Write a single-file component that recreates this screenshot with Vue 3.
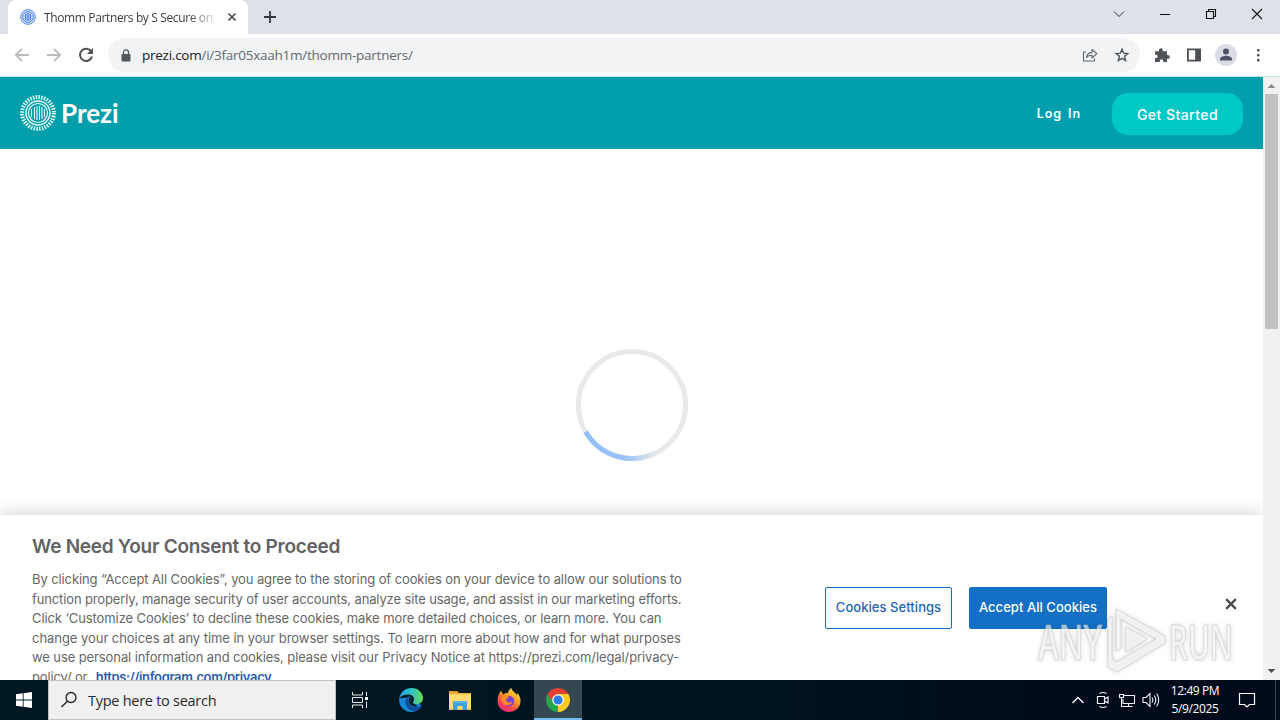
<template>
  <div class="desktop">
    <div class="tabstrip">
      <div class="tab">
        <svg class="favicon" viewBox="0 0 16 16">
          <circle cx="8" cy="8" r="7.3" fill="#d5e5ff" stroke="#4b82ee" stroke-width="1" />
          <circle cx="8" cy="8" r="5.3" fill="none" stroke="#4b82ee" stroke-width="1" />
          <path d="M5.5 5v6M7.2 4v8M8.9 4v8M10.6 5v6" stroke="#3b76ea" stroke-width="1" />
        </svg>
        <span class="tab-title">Thomm Partners by S Secure on</span>
        <svg class="tab-close" viewBox="0 0 10 10"><path d="M1.5 1.5l7 7M8.5 1.5l-7 7" stroke="#45494d" stroke-width="1.6" /></svg>
      </div>
      <svg class="new-tab" viewBox="0 0 12 12"><path d="M6 0v12M0 6h12" stroke="#34373b" stroke-width="1.8" /></svg>
      <div class="win-buttons">
        <svg viewBox="0 0 12 12"><path d="M1 3.5l5 5 5-5" fill="none" stroke="#333" /></svg>
        <svg viewBox="0 0 12 12"><path d="M1 6.5h10" stroke="#111" /></svg>
        <svg viewBox="0 0 12 12"><path d="M1.5 3.5h7v7h-7zM3.5 3.5v-2h7v7h-2" fill="none" stroke="#111" stroke-width="1.1" /></svg>
        <svg viewBox="0 0 12 12"><path d="M1 1l10 10M11 1L1 11" stroke="#111" stroke-width="1.1" /></svg>
      </div>
    </div>

    <div class="toolbar">
      <div class="nav">
        <svg viewBox="0 0 16 16"><path d="M15 8H2M8 1.8L1.8 8 8 14.2" fill="none" stroke="#b9bbbe" stroke-width="1.8" /></svg>
        <svg viewBox="0 0 16 16"><path d="M1 8h13M8 1.8L14.2 8 8 14.2" fill="none" stroke="#b9bbbe" stroke-width="1.8" /></svg>
        <svg viewBox="0 0 16 16">
          <path d="M13.2 4.4A6.1 6.1 0 1 0 14 9.5" fill="none" stroke="#505357" stroke-width="2" />
          <path d="M15 1v6H9z" fill="#505357" />
        </svg>
      </div>
      <div class="omnibox">
        <svg class="lock" viewBox="0 0 10 13">
          <rect x="0.5" y="5" width="9" height="7.5" rx="1" fill="#53575b" />
          <path d="M2.5 5.5V3.4a2.5 2.5 0 0 1 5 0v2.1" fill="none" stroke="#53575b" stroke-width="1.3" />
        </svg>
        <span class="url"><b>prezi.com</b>/i/3far05xaah1m/thomm-partners/</span>
        <svg class="share" viewBox="0 0 16 16">
          <path d="M4 5H1.5v9h11v-2.500M4.500 10.500C5 7.500 7 5.600 10 5.400V2.500l4.800 4.200L10 11V8.300C7.500 8.300 5.800 9 4.500 10.500z" fill="none" stroke="#5f6368" stroke-width="1.100" stroke-linejoin="round" />
        </svg>
        <svg class="star" viewBox="0 0 16 16">
          <path d="M8 2.200l1.600 4 4.200.4-3.200 2.700 1 4.200L8 11.300l-3.600 2.200 1-4.200-3.200-2.700 4.200-.4z" fill="none" stroke="#505357" stroke-width="1.400" />
        </svg>
      </div>
      <div class="tools">
        <svg viewBox="0 0 16 16"><path d="M1 4.200h4V3.100a1.900 1.900 0 0 1 3.800 0v1.100H13V8h.9a1.900 1.900 0 0 1 0 3.800H13V15H9.200v-1a1.700 1.700 0 0 0-3.400 0v1H1v-4h1a1.600 1.600 0 0 0 0-3.200H1z" fill="#505357" /></svg>
        <svg viewBox="0 0 16 16"><path d="M1 1.500h14v13H1zM2.800 3.300v9.400h6.400V3.300z" fill="#4b4e52" fill-rule="evenodd" /></svg>
        <svg class="avatar" viewBox="0 0 22 22">
          <circle cx="11" cy="11" r="11" fill="#dadce6" />
          <circle cx="11" cy="7.600" r="3" fill="#4e5264" />
          <path d="M5 16.500v-1.500c0-2.200 4-3.200 6-3.200s6 1 6 3.200v1.500z" fill="#4e5264" />
        </svg>
        <svg viewBox="0 0 16 16"><g fill="#4b4e52"><rect x="7" y="2" width="2.600" height="2.600" rx="1" /><rect x="7" y="6.900" width="2.600" height="2.600" rx="1" /><rect x="7" y="11.800" width="2.600" height="2.600" rx="1" /></g></svg>
      </div>
    </div>

    <div class="viewport">
      <div class="page">
        <header class="site-header">
          <svg class="logo" viewBox="0 0 36 36">
            <g fill="none" stroke="#e9fbfc">
              <circle cx="18" cy="18" r="15.900" stroke-width="4" stroke-dasharray="1.500 1.275" />
              <circle cx="18" cy="18" r="12" stroke-width="1.400" />
              <circle cx="18" cy="18" r="9.500" stroke-width="1.200" />
              <path d="M11.500 14v8M14.500 12v12M17 11v14M19.500 11v14M22 12v12M24.500 14v8" stroke-width="1.100" />
            </g>
          </svg>
          <span class="brand">Prezi</span>
          <a class="login">Log In</a>
          <a class="get-started">Get Started</a>
        </header>

        <main class="stage">
          <svg class="loader" viewBox="0 0 112 112">
            <defs>
              <linearGradient id="arc" x1="9" y1="0" x2="80" y2="0" gradientUnits="userSpaceOnUse">
                <stop offset="0" stop-color="#91bffa" />
                <stop offset="0.550" stop-color="#9ac3f8" />
                <stop offset="1" stop-color="#e9e9ea" />
              </linearGradient>
            </defs>
            <circle cx="56" cy="56" r="53.500" fill="none" stroke="#e9e9e9" stroke-width="5" />
            <path d="M9.700 82.800A53.500 53.500 0 0 0 80 103.800" fill="none" stroke="url(#arc)" stroke-width="5" />
          </svg>
        </main>

        <section class="consent">
          <div class="consent-text">
            <h2>We Need Your Consent to Proceed</h2>
            <p v-for="line in lines" :key="line.text" :style="{ letterSpacing: line.gap + 'px' }">{{ line.text }}</p>
            <p class="last">policy/ or <a>https://infogram.com/privacy</a></p>
          </div>
          <button class="btn settings">Cookies Settings</button>
          <button class="btn accept">Accept All Cookies</button>
          <svg class="consent-close" viewBox="0 0 12 12"><path d="M1.200 1.200l9.600 9.600M10.800 1.200l-9.600 9.600" stroke="#4c4c4c" stroke-width="2.400" /></svg>
        </section>
      </div>

      <div class="scrollbar">
        <svg viewBox="0 0 17 17"><path d="M4.500 11h8l-4-4z" fill="#8b8b8b" /></svg>
        <div class="thumb"></div>
        <svg class="down" viewBox="0 0 17 17"><path d="M4.500 6h8l-4 4z" fill="#505050" /></svg>
      </div>
    </div>

    <div class="taskbar">
      <div class="start">
        <svg viewBox="0 0 16 16"><path d="M0 2.300l6.800-1v6.200H0zM7.600 1.200L16 0v7.500H7.600zM0 8.400h6.800v6.300L0 13.700zM7.600 8.400H16V16l-8.400-1.200z" fill="#fff" /></svg>
      </div>
      <div class="search">
        <svg viewBox="0 0 18 18"><circle cx="11" cy="6.500" r="5" fill="none" stroke="#222" stroke-width="1.300" /><path d="M7.400 10.200L1.500 16" stroke="#222" stroke-width="1.400" /></svg>
        <span>Type here to search</span>
      </div>
      <div class="app views">
        <svg class="task-view" viewBox="0 0 18 18"><path d="M1.500 1v3h10V1M1.500 17v-3h10v3M1.500 6.500h10v5h-10zM15.500 1v4M15.500 10.500V17" fill="none" stroke="#e5eaec" /><rect x="14" y="6" width="3" height="3" fill="#fff" /></svg>
      </div>
      <div class="app">
        <svg viewBox="0 0 24 24">
          <defs>
            <linearGradient id="edge-top" x1="0" y1="0.500" x2="1" y2="0.500">
              <stop offset="0" stop-color="#21a5df" /><stop offset="0.500" stop-color="#2bc3c8" /><stop offset="1" stop-color="#67d94e" />
            </linearGradient>
          </defs>
          <path d="M.3 10.500C-.8 17 4.500 24 12 24c5 0 8.500-2.500 10.500-6.500L12 9z" fill="#1687d2" />
          <path d="M.3 10.500C1.500 4 6.500 0 12.300 0 19.500 0 24 5 24 10c0 4-3 6-6.300 6-2.200 0-3.700-.8-3.700-1.800 0-.8 1-1.200 1-3C15 8.500 12.500 6.500 9 6.500c-4 0-7 1.600-8.700 4z" fill="url(#edge-top)" />
          <path d="M10 8.200c-4 2.300-4.800 7-2 10.800 2.200 3.300 6 5 9.400 3.800 2.100-.8 4-2.400 5-4.100.3-.6-.3-.9-.8-.7-5.600 2.300-12.300.5-12.300-5.500 0-1.800.8-3.300 2-4.100z" fill="#124c9a" />
          <path d="M11 9.500c-2 2-1.700 6 1.500 8 2 1 4 1.300 6.200.8L16 16.200c-1.500-.4-2.300-1.200-2-2.200.4-.8 1-1.300 1-2.800 0-1.500-2-2.700-4-1.700z" fill="#04202c" />
        </svg>
      </div>
      <div class="app">
        <svg viewBox="0 0 24 24">
          <path d="M1 3h8l2 2h12v17H1z" fill="#f3b93f" />
          <path d="M1 6.500h22V21H1z" fill="#ffda75" />
          <path d="M1 3h8l1.500 1.800H1z" fill="#e59a25" />
          <path d="M5 13h14v9h-4.500v-4h-5v4H5z" fill="#3e9ddb" />
          <path d="M5 13h14v2H5z" fill="#5ab5ea" />
        </svg>
      </div>
      <div class="app">
        <svg viewBox="0 0 24 24">
          <defs>
            <linearGradient id="fire" x1="0.850" y1="0" x2="0.250" y2="1">
              <stop offset="0" stop-color="#ffe84b" /><stop offset="0.450" stop-color="#ff9620" /><stop offset="0.750" stop-color="#ff4351" /><stop offset="1" stop-color="#e92883" />
            </linearGradient>
          </defs>
          <path d="M4.500 2.500c0 1.700 1 3.200 2 4C8 5 9.500 5 11 5.200 11 3 12.500 1 14.500 0c0 3 4 4 5 7l1-2c2 2.500 3 5 3 8C23.500 19.500 18 24 12 24S.5 19.500.5 13C.5 8.500 2 5 4.500 2.500z" fill="url(#fire)" />
          <circle cx="12" cy="13" r="5.300" fill="#7c42cf" />
          <path d="M5 9c2.500-2 4.500-.7 7-.4 0 1.600-2.300 1.600-3 3 .5 3 3.500 4 6.500 2-1 4.500-9 5-10.500 0z" fill="#ff8b24" />
        </svg>
      </div>
      <div class="app active">
        <svg viewBox="0 0 24 24">
          <path d="M12 12L22.390 6A12 12 0 0 1 12 24z" fill="#fdcb22" />
          <path d="M12 12V24A12 12 0 0 1 1.610 6z" fill="#2ba24c" />
          <path d="M12 6h10.390L17.200 15z" fill="#fdcb22" />
          <path d="M1.610 6L6.800 15 12 12V6z" fill="#2ba24c" />
          <path d="M1.610 6A12 12 0 0 1 22.390 6H12L6.800 9.500 5.500 12.700z" fill="#e54033" />
          <path d="M17.200 15L12 24V17z" fill="#fdcb22" />
          <circle cx="12" cy="12" r="5.800" fill="#fff" />
          <circle cx="12" cy="12" r="4.600" fill="#2d7bea" />
        </svg>
      </div>
      <div class="tray">
        <svg class="chevron" viewBox="0 0 12 12"><path d="M.5 9L6 3.500 11.500 9" fill="none" stroke="#fff" stroke-width="1.300" /></svg>
        <svg class="meet" viewBox="0 0 14 18"><path d="M3.500 2.500q3.500-2 7 0M3.500 15.500q3.500 2 7 0M1.500 5.500h7v7h-7zM8.500 8l3.500-2v6l-3.500-2" fill="none" stroke="#eef" stroke-width="1.200" /></svg>
        <svg class="network" viewBox="0 0 18 16"><path d="M6 3.500h10.500v8H5V7M10.500 11.500v3M6.500 14.500h8M1.500 2.500h4v3h-4zM3.500 5.500v9h3" fill="none" stroke="#eef" stroke-width="1.100" /></svg>
        <svg class="volume" viewBox="0 0 18 16"><path d="M1 5.500h3l4-4v13l-4-4H1zM10 5.500q1.800 2.500 0 5M12.300 3.500q3 4.500 0 9M14.700 1.500q4 6.500 0 13" fill="none" stroke="#eef" stroke-width="1.100" /></svg>
        <div class="clock"><span>12:49 PM</span><span>5/9/2025</span></div>
        <svg class="notify" viewBox="0 0 18 18"><path d="M1.500 2.500h15v11h-5l-2.500 2.500-2.500-2.500h-5z" fill="none" stroke="#fff" stroke-width="1.200" /></svg>
      </div>
    </div>

    <svg class="watermark" viewBox="0 0 200 70">
      <g fill="#ffffff" fill-opacity="0.600" stroke="#bdbdbd" stroke-opacity="0.500" stroke-width="1">
        <text x="2" y="55" textLength="64" lengthAdjust="spacingAndGlyphs">ANY</text>
        <text x="133" y="55" textLength="64" lengthAdjust="spacingAndGlyphs">RUN</text>
        <path d="M80 4l49 27v7L81 67l-9-5V13l4-2v43l5 3 39-23-35-20v29l-5 3zM90 22l21 12-21 13z" fill-rule="evenodd" />
      </g>
    </svg>
  </div>
</template>

<script setup>
// gap is the letter spacing of one line
const lines = [
  { text: 'By clicking “Accept All Cookies”, you agree to the storing of cookies on your device to allow our solutions to', gap: -0.1 },
  { text: 'function properly, manage security of user accounts, analyze site usage, and assist in our marketing efforts.', gap: -0.13 },
  { text: 'Click ‘Customize Cookies’ to decline these cookies, make more detailed choices, or learn more. You can', gap: -0.09 },
  { text: 'change your choices at any time in your browser settings. To learn more about how and for what purposes', gap: -0.045 },
  { text: 'we use personal information and cookies, please visit our Privacy Notice at https://prezi.com/legal/privacy-', gap: -0.1 }
]
</script>

<style>
body {
  background: #fff;
  overflow: hidden;
}
</style>

<style scoped>
.desktop {
  position: relative;
  display: flex;
  flex-direction: column;
  width: 1280px;
  height: 720px;
  overflow: hidden;
  font-family: "Open Sans", "Noto Sans", sans-serif;
}
svg {
  display: block;
  flex: none;
}
.tabstrip {
  display: flex;
  flex: none;
  align-items: center;
  height: 34px;
  padding-left: 8px;
  background: #dee1e8;
}
.tab {
  display: flex;
  align-items: center;
  box-sizing: border-box;
  width: 240px;
  height: 34px;
  padding: 0 11px 0 12px;
  border-radius: 8px 8px 0 0;
  background: #fff;
}
.favicon {
  width: 16px;
  height: 16px;
}
.tab-title {
  width: 173px;
  margin-left: 8px;
  overflow: hidden;
  color: #3c4043;
  font-size: 12px;
  white-space: nowrap;
  letter-spacing: -0.37px;
  -webkit-mask-image: linear-gradient(90deg, #000 145px, transparent 175px);
  mask-image: linear-gradient(90deg, #000 145px, transparent 175px);
}
.tab-close {
  width: 10px;
  height: 10px;
  margin-left: 10px;
}
.new-tab {
  width: 12px;
  height: 12px;
  margin-left: 16px;
}
.win-buttons {
  display: flex;
  gap: 34px;
  margin: -6px 17px 0 auto;
}
.win-buttons svg {
  width: 12px;
  height: 12px;
}
.toolbar {
  display: flex;
  flex: none;
  align-items: center;
  box-sizing: border-box;
  height: 43px;
  padding: 0 14px;
  border-bottom: 1px solid #c9e4e7;
  background: #fff;
}
.nav {
  display: flex;
  gap: 16px;
}
.nav svg {
  width: 16px;
  height: 16px;
}
.omnibox {
  display: flex;
  align-items: center;
  box-sizing: border-box;
  width: 1032px;
  height: 34px;
  margin-left: 14px;
  padding: 0 10px 0 13px;
  border-radius: 17px;
  background: #f1f3f4;
}
.lock {
  width: 10px;
  height: 13px;
}
.url {
  flex: 1;
  margin-left: 11px;
  color: #65696d;
  font-size: 13.5px;
  letter-spacing: -0.25px;
}
.url b {
  color: #202124;
  font-weight: 400;
}
.share,
.star {
  width: 16px;
  height: 16px;
}
.star {
  margin-left: 16px;
}
.tools {
  display: flex;
  align-items: center;
  gap: 16px;
  margin-left: 14px;
}
.tools svg {
  width: 16px;
  height: 16px;
}
.tools .avatar {
  width: 22px;
  height: 22px;
  margin: 0 -3px;
}
.viewport {
  display: flex;
  flex: none;
  height: 603px;
}
.page {
  display: flex;
  flex-direction: column;
  width: 1263px;
  overflow: hidden;
  font-family: Inter, "Open Sans", sans-serif;
}
.site-header {
  display: flex;
  flex: none;
  align-items: center;
  box-sizing: border-box;
  height: 72px;
  padding: 0 20px;
  background: #009fab;
  color: #fff;
}
.logo {
  width: 36px;
  height: 36px;
}
.brand {
  margin-left: 5px;
  font-family: Lato, sans-serif;
  font-size: 26px;
  font-weight: 700;
}
.login {
  margin-left: auto;
  font-size: 12.5px;
  font-weight: 600;
  letter-spacing: 0.9px;
  word-spacing: 2px;
}
.get-started {
  display: flex;
  align-items: center;
  justify-content: center;
  width: 131px;
  height: 42px;
  margin-left: 31px;
  margin-top: 2px;
  border-radius: 16px;
  background: #00c8c5;
  font-size: 14px;
  font-weight: 500;
  letter-spacing: 0.45px;
}
.stage {
  display: flex;
  flex: none;
  justify-content: center;
  box-sizing: border-box;
  height: 366px;
  padding-top: 200px;
}
.loader {
  width: 112px;
  height: 112px;
}
.consent {
  display: flex;
  flex: none;
  box-sizing: border-box;
  height: 185px;
  padding-left: 32px;
  background: #fff;
  box-shadow: 0 0 18px rgba(0, 0, 0, 0.2);
}
.consent-text {
  flex: none;
  width: 793px;
  color: #666;
}
.consent-text h2 {
  margin: 20px 0 12px;
  color: #626262;
  font-size: 19px;
  font-weight: 600;
  line-height: 23px;
  letter-spacing: -0.27px;
  white-space: nowrap;
}
.consent-text p {
  margin: 0;
  font-size: 13px;
  line-height: 19.5px;
  white-space: nowrap;
}
.consent-text .last {
  letter-spacing: -0.15px;
}
.last a {
  margin-left: 5px;
  color: #2e5cab;
  font-weight: 600;
  letter-spacing: -0.35px;
  text-decoration: underline;
}
.btn {
  box-sizing: border-box;
  height: 42px;
  margin: 72px 0 0;
  padding: 0 0 2px;
  border: 1px solid #1470c6;
  border-radius: 2px;
  font-family: inherit;
  font-size: 13px;
  font-weight: 500;
  letter-spacing: 0.05px;
  white-space: nowrap;
}
.settings {
  width: 127px;
  background: #fff;
  color: #1f64b8;
}
.accept {
  width: 138px;
  margin-left: 17px;
  background: #1470c6;
  color: #fff;
}
.consent-close {
  width: 12px;
  height: 12px;
  margin: 83px 0 0 118px;
}
.scrollbar {
  display: flex;
  flex-direction: column;
  width: 17px;
  background: #f1f1f1;
}
.scrollbar svg {
  width: 17px;
  height: 17px;
}
.thumb {
  width: 13px;
  height: 235px;
  margin-left: 2px;
  background: #c1c1c1;
}
.scrollbar .down {
  margin-top: auto;
}
.taskbar {
  display: flex;
  flex: none;
  height: 40px;
  background: linear-gradient(90deg, #001822, #00141e 60%, #020b1c 80%, #020b1c);
}
.start {
  display: flex;
  align-items: center;
  justify-content: center;
  width: 48px;
}
.start svg {
  width: 16px;
  height: 16px;
}
.search {
  display: flex;
  align-items: center;
  box-sizing: border-box;
  width: 288px;
  padding-left: 11px;
  border: 1px solid #c2c2c2;
  background: #f1f1f1;
  color: #292929;
  font-size: 14.5px;
  letter-spacing: -0.27px;
}
.search svg {
  width: 18px;
  height: 18px;
}
.search span {
  margin-left: 10px;
}
.app {
  display: flex;
  align-items: center;
  justify-content: center;
  box-sizing: border-box;
  width: 48px;
  margin-right: 1px;
  border-bottom: 2px solid transparent;
}
.views {
  margin-right: 3px;
}
.app svg {
  width: 24px;
  height: 24px;
  margin-top: 2px;
}
.app .task-view {
  width: 18px;
  height: 18px;
  margin-top: 1px;
}
.active {
  border-bottom-color: #76b9ed;
  background: #354750;
}
.tray {
  display: flex;
  align-items: center;
  margin-left: auto;
  border-right: 1px solid #3c4654;
  margin-right: 4px;
  padding-right: 19px;
}
.chevron {
  width: 12px;
  height: 12px;
}
.meet {
  width: 14px;
  height: 18px;
  margin-left: 12px;
}
.network {
  width: 18px;
  height: 16px;
  margin-left: 8px;
}
.volume {
  width: 18px;
  height: 16px;
  margin-left: 6px;
}
.clock {
  display: flex;
  flex-direction: column;
  align-items: center;
  width: 50px;
  margin: 0 18px 0 10px;
  color: #fff;
  font-size: 12px;
  line-height: 18px;
  letter-spacing: -0.4px;
  white-space: nowrap;
}
.notify {
  width: 18px;
  height: 18px;
}
.watermark {
  position: absolute;
  top: 605px;
  left: 1036px;
  width: 200px;
  height: 70px;
  overflow: visible;
  filter: drop-shadow(0 0 2px rgba(0, 0, 0, 0.25));
  font-family: "Open Sans", sans-serif;
  font-size: 48px;
  font-weight: 600;
}
</style>
